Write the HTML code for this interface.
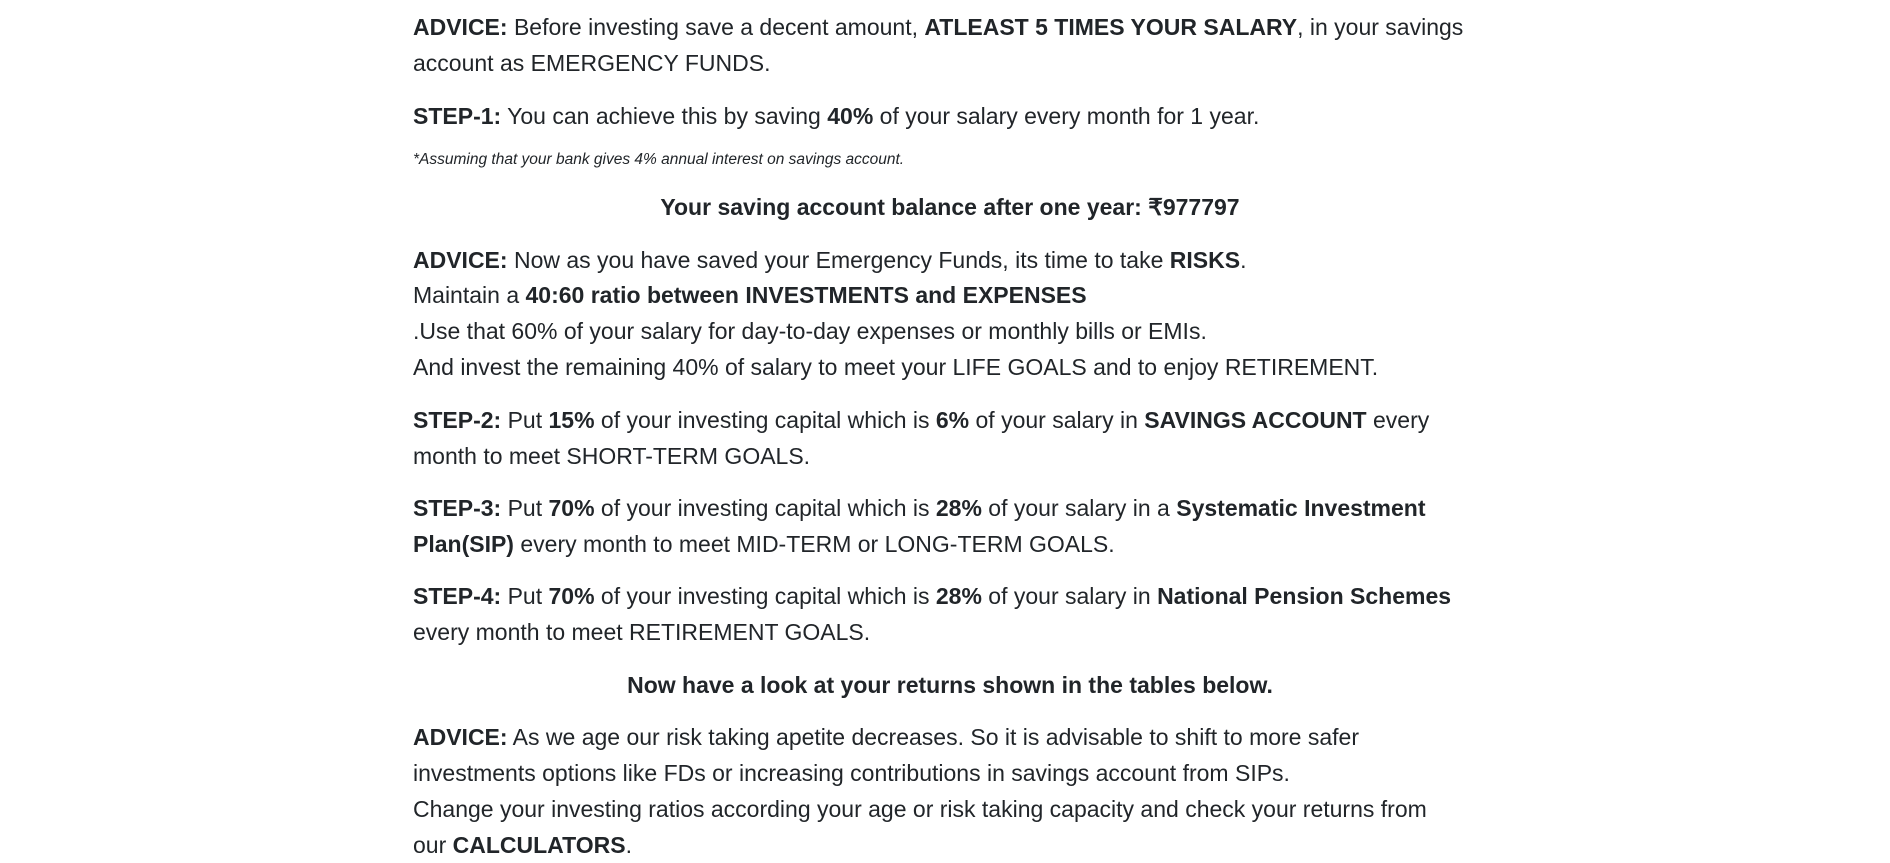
<!DOCTYPE html>
<html><head><meta charset="utf-8"><style>
html,body{margin:0;padding:0;background:#fff;width:1890px;height:858px;overflow:hidden}
body{font-family:"Liberation Sans",Arial,sans-serif;color:#212529;font-size:23px}
.l{position:absolute;left:413px;height:36px;line-height:36px;white-space:nowrap}
.c{position:absolute;left:0;width:1900px;text-align:center;height:36px;line-height:36px;font-weight:bold;white-space:nowrap}
b{font-weight:bold}
.s{font-style:italic;font-size:15.5px}
</style></head><body>
<div class="l" style="top:9px"><b>ADVICE:</b> Before investing save a decent amount, <b>ATLEAST 5 TIMES YOUR SALARY</b>, in your savings</div>
<div class="l" style="top:45px">account as EMERGENCY FUNDS.</div>
<div class="l" style="top:98px"><b>STEP-1:</b> You can achieve this by saving <b>40%</b> of your salary every month for 1 year.</div>
<div class="l s" style="top:142px">*Assuming that your bank gives 4% annual interest on savings account.</div>
<div class="c" style="top:189px">Your saving account balance after one year: ₹977797</div>
<div class="l" style="top:242px"><b>ADVICE:</b> Now as you have saved your Emergency Funds, its time to take <b>RISKS</b>.</div>
<div class="l" style="top:277px">Maintain a <b>40:60 ratio between INVESTMENTS and EXPENSES</b></div>
<div class="l" style="top:313px">.Use that 60% of your salary for day-to-day expenses or monthly bills or EMIs.</div>
<div class="l" style="top:349px">And invest the remaining 40% of salary to meet your LIFE GOALS and to enjoy RETIREMENT.</div>
<div class="l" style="top:402px"><b>STEP-2:</b> Put <b>15%</b> of your investing capital which is <b>6%</b> of your salary in <b>SAVINGS ACCOUNT</b> every</div>
<div class="l" style="top:438px">month to meet SHORT-TERM GOALS.</div>
<div class="l" style="top:490px"><b>STEP-3:</b> Put <b>70%</b> of your investing capital which is <b>28%</b> of your salary in a <b>Systematic Investment</b></div>
<div class="l" style="top:526px"><b>Plan(SIP)</b> every month to meet MID-TERM or LONG-TERM GOALS.</div>
<div class="l" style="top:578px"><b>STEP-4:</b> Put <b>70%</b> of your investing capital which is <b>28%</b> of your salary in <b>National Pension Schemes</b></div>
<div class="l" style="top:614px">every month to meet RETIREMENT GOALS.</div>
<div class="c" style="top:667px">Now have a look at your returns shown in the tables below.</div>
<div class="l" style="top:719px"><b>ADVICE:</b> As we age our risk taking apetite decreases. So it is advisable to shift to more safer</div>
<div class="l" style="top:755px">investments options like FDs or increasing contributions in savings account from SIPs.</div>
<div class="l" style="top:791px">Change your investing ratios according your age or risk taking capacity and check your returns from</div>
<div class="l" style="top:827px">our <b>CALCULATORS</b>.</div>
</body></html>
